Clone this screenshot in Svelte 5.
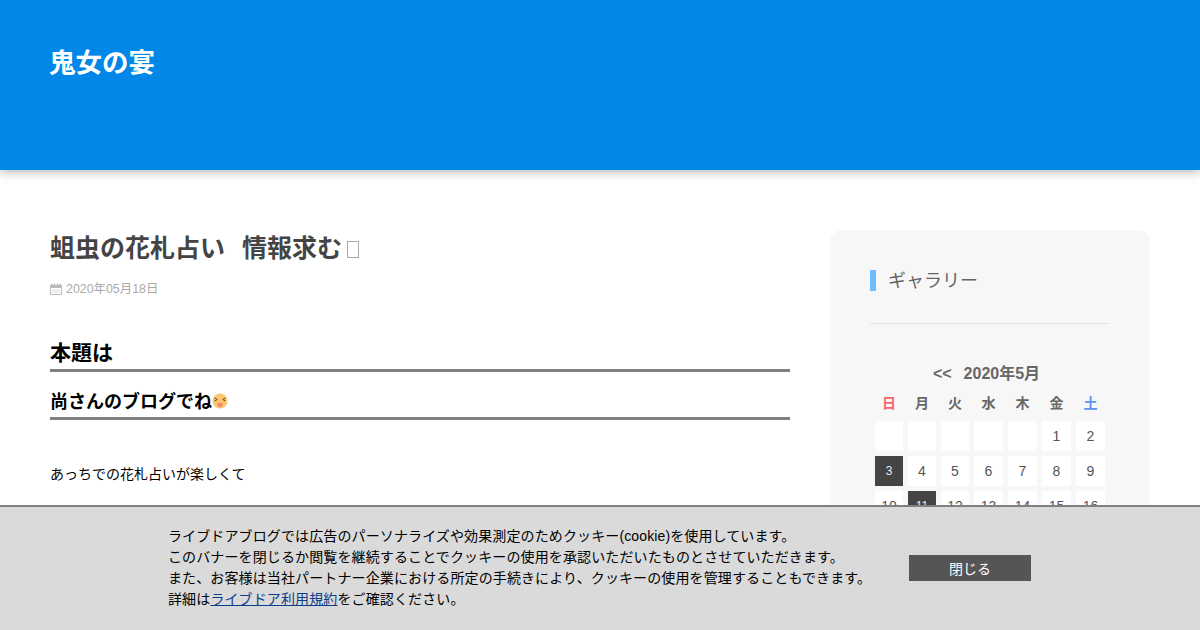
<script>
  const weekdays = ["日", "月", "火", "水", "木", "金", "土"];
  const blanks = 5;
  const days = [];
  for (let i = 0; i < blanks; i++) days.push("");
  for (let d = 1; d <= 16; d++) days.push(d);
  const linked = [3, 11];
</script>

<header class="site-header">
  <a class="blog-title" href="#top">鬼女の宴</a>
</header>

<div class="content">
  <main class="article">
    <h1 class="article-title">蛆虫の花札占い&nbsp;&nbsp;情報求む<span class="tofu"></span></h1>
    <div class="article-date">
      <svg width="12" height="12" viewBox="0 0 12 12" aria-hidden="true">
        <path d="M0.500 2.500h11v9h-11z" fill="none" stroke="#bbb" />
        <path d="M0 2h12v3H0z" fill="#bbb" />
        <path d="M2 0.500v2.500M4.700 0.500v2.500M7.300 0.500v2.500M10 0.500v2.500" stroke="#aaa" stroke-width="1" />
        <path d="M2 7h8M2 9h8" stroke="#ddd" stroke-width="1" />
      </svg>
      <span>2020年05月18日</span>
    </div>
    <div class="body">
      <h2>本題は</h2>
      <h3>尚さんのブログでね<svg class="emoji" width="16" height="16" viewBox="0 0 16 16" aria-hidden="true">
          <circle cx="8" cy="8" r="7.500" fill="#fbc66c" />
          <path d="M2.500 5l2.800 1.500-2.800 1.500M13.500 5l-2.800 1.500 2.800 1.500" fill="none" stroke="#6b4a2a" stroke-width="1" />
          <path d="M5.500 10h5v1.500a2.500 2.500 0 0 1-5 0z" fill="#ef8a6a" />
        </svg></h3>
      <p>あっちでの花札占いが楽しくて</p>
    </div>
  </main>

  <aside class="sidebar">
    <h4 class="side-title">ギャラリー</h4>
    <hr />
    <div class="calendar">
      <div class="cal-head"><span class="prev">&lt;&lt;</span><span>2020年5月</span></div>
      <div class="cal-grid">
        {#each weekdays as w, i}
          <div class="wd" class:sun={i === 0} class:sat={i === 6}>{w}</div>
        {/each}
        {#each days as d}
          <div class="day" class:on={linked.includes(d)}>{d}</div>
        {/each}
      </div>
    </div>
  </aside>
</div>

<div class="cookie">
  <div class="cookie-text">
    ライブドアブログでは広告のパーソナライズや効果測定のためクッキー(cookie)を使用しています。<br />
    このバナーを閉じるか閲覧を継続することでクッキーの使用を承認いただいたものとさせていただきます。<br />
    また、お客様は当社パートナー企業における所定の手続きにより、クッキーの使用を管理することもできます。<br />
    詳細は<a href="#terms">ライブドア利用規約</a>をご確認ください。
  </div>
  <button class="close">閉じる</button>
</div>

<style>
  :global(body) {
    font-family: "Liberation Sans", "Noto Sans CJK JP", sans-serif;
    background: #fff;
    overflow: hidden;
    height: 630px;
  }

  .site-header {
    height: 170px;
    box-sizing: border-box;
    padding: 45px 49px 0;
    background: #0087e8;
    box-shadow: 0 2px 10px rgba(0, 0, 0, 0.3);
  }

  .blog-title {
    color: #fff;
    font-size: 26.5px;
    line-height: 36px;
    font-weight: bold;
    text-decoration: none;
    font-family: "Liberation Serif", "Noto Sans CJK JP", serif;
  }

  .content {
    display: flex;
    justify-content: space-between;
    padding: 60px 50px 0;
  }

  .article {
    width: 740px;
  }

  .article-title {
    margin: 0;
    font-size: 25px;
    line-height: 36px;
    word-spacing: 1.5px;
    color: #444;
  }

  .tofu {
    display: inline-block;
    width: 10px;
    height: 15px;
    margin-left: 5px;
    border: 1px solid #aaa;
    vertical-align: -1px;
  }

  .article-date {
    display: flex;
    align-items: center;
    gap: 4px;
    margin-top: 14px;
    font-size: 12.4px;
    line-height: 18px;
    color: #aaa;
  }

  .body {
    margin-top: 40px;
    color: #000;
  }

  h2 {
    margin: 0;
    font-size: 21px;
    line-height: 30px;
    padding-bottom: 1px;
    border-bottom: 3px solid #808080;
  }

  h3 {
    margin: 15px 0 0;
    font-size: 18px;
    line-height: 30px;
    border-bottom: 3px solid #808080;
  }

  .emoji {
    vertical-align: -1px;
  }

  .body p {
    margin: 42px 0 0;
    font-size: 14px;
    line-height: 24px;
  }

  .sidebar {
    width: 320px;
    box-sizing: border-box;
    padding: 40px;
    border-radius: 12px;
    background: #f7f7f7;
  }

  .side-title {
    margin: 0;
    padding: 1px 0 0 12px;
    border-left: 6px solid #6cbcff;
    font-size: 18px;
    font-weight: normal;
    line-height: 20px;
    color: #666;
  }

  hr {
    margin: 32px 0 0;
    border: 0;
    border-top: 1px solid #e2e2e2;
  }

  .calendar {
    margin-top: 38px;
    color: #555;
  }

  .cal-head {
    display: flex;
    justify-content: center;
    gap: 12px;
    margin-right: 7px;
    font-size: 16px;
    line-height: 24px;
    font-weight: bold;
    color: #666;
  }

  .cal-grid {
    display: grid;
    grid-template-columns: repeat(3, 28px) repeat(4, 29px);
    width: 230px;
    gap: 5px;
    margin: 5px auto 0;
  }

  .wd {
    height: 25px;
    line-height: 25px;
    text-align: center;
    font-size: 14px;
    font-weight: bold;
    color: #666;
  }

  .wd.sun {
    color: #f9636d;
  }

  .wd.sat {
    color: #5b94ee;
  }

  .day {
    height: 30px;
    line-height: 30px;
    text-align: center;
    font-size: 14px;
    background: #fff;
    color: #555;
  }

  .day.on {
    background: #444;
    color: #e8e8e8;
    font-size: 12px;
  }

  .cookie {
    position: fixed;
    left: 0;
    right: 0;
    bottom: 0;
    height: 125px;
    box-sizing: border-box;
    border-top: 2px solid #808080;
    background: #dadada;
    display: flex;
    align-items: center;
    padding: 0 0 2px 168px;
  }

  .cookie-text {
    width: 741px;
    font-size: 14px;
    line-height: 21px;
    letter-spacing: 0.12px;
    color: #000;
  }

  .cookie-text a {
    color: #0b3d8c;
  }

  .close {
    width: 122px;
    height: 26px;
    margin: 0;
    padding: 0;
    border: 0;
    background: #555;
    color: #fff;
    font-size: 14px;
    font-family: inherit;
  }
</style>
